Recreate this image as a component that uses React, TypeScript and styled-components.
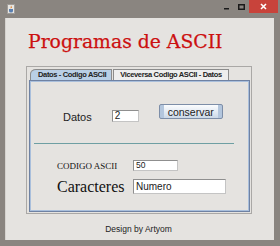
import styled, { createGlobalStyle } from "styled-components";

const Global = createGlobalStyle`
  body {
    margin: 0;
    background: #8a8580;
  }
`;

const Frame = styled.div`
  width: 280px;
  height: 246px;
  background: #8a8580;
  display: flex;
  flex-direction: column;
  box-sizing: border-box;
  padding: 0 6px 6px 5px;
`;

const TitleBar = styled.div`
  height: 18px;
  display: flex;
  align-items: flex-start;
  margin-right: -4px;
`;

const AppIcon = styled.svg`
  margin: 4px 0 0 2px;
`;

const Spacer = styled.div`
  flex: 1;
`;

const WinButton = styled.div<{ $close?: boolean }>`
  width: ${(p) => (p.$close ? "29px" : "15px")};
  height: 13px;
  display: flex;
  align-items: center;
  justify-content: center;
  background: ${(p) => (p.$close ? "#c8433b" : "transparent")};
`;

const Body = styled.div`
  flex: 1;
  background: #e5e3e0;
  border-left: 1px solid #d6d3cf;
  display: flex;
  flex-direction: column;
`;

const Heading = styled.h1`
  margin: 12px 0 0 22px;
  font-family: "DejaVu Serif", serif;
  font-weight: normal;
  font-size: 18.8px;
  line-height: 23px;
  color: #cc1010;
  -webkit-text-stroke: 0.25px #cc1010;
`;

const PaneBox = styled.div`
  margin: 13px 0 0 20px;
  width: 226px;
  height: 148px;
  box-sizing: border-box;
  border: 1px solid #aaa8a6;
  padding: 2px 1px 1px 2px;
  display: flex;
  flex-direction: column;
`;

const TabStrip = styled.div`
  display: flex;
  height: 11px;
  gap: 1px;
  padding-left: 1px;
`;

const Tab = styled.div<{ $active?: boolean }>`
  height: 11px;
  box-sizing: border-box;
  padding: 0 ${(p) => (p.$active ? "5px 0 7px" : "6px")};
  border: 1px solid #8c8c8c;
  border-bottom: none;
  border-top-left-radius: ${(p) => (p.$active ? "6px 5px" : "0")};
  background: ${(p) => (p.$active ? "#b9cfe6" : "#eeeeee")};
  font-family: "Liberation Sans", Arial, sans-serif;
  font-weight: bold;
  font-size: 7.5px;
  letter-spacing: -0.35px;
  line-height: 10px;
  color: #222222;
  white-space: nowrap;
`;

const Content = styled.div`
  flex: 1;
  border: 1px solid #6f82a3;
  box-shadow: inset 1px 1px 0 #a9bfdc, inset -1px -1px 0 #a9bfdc;
  display: flex;
  flex-direction: column;
`;

const TopRow = styled.div`
  display: flex;
  align-items: flex-start;
  margin: 23px 0 0 33px;
`;

const SansLabel = styled.span`
  font-family: "Liberation Sans", Arial, sans-serif;
  font-size: 11px;
  line-height: 12px;
  color: #222222;
  margin-top: 7px;
`;

const Field = styled.div<{ $w: number; $h: number; $size: number }>`
  width: ${(p) => p.$w}px;
  height: ${(p) => p.$h}px;
  box-sizing: border-box;
  background: #ffffff;
  border: 1px solid #8f8f8f;
  border-right-color: #c4c4c4;
  border-bottom-color: #c4c4c4;
  padding-left: 2px;
  font-family: "Liberation Sans", Arial, sans-serif;
  font-size: ${(p) => p.$size}px;
  line-height: ${(p) => p.$h - 2}px;
  color: #222222;
`;

const DatosField = styled(Field)`
  margin: 6px 0 0 20px;
`;

const Button = styled.div`
  margin-left: 20px;
  width: 64px;
  height: 15px;
  box-sizing: border-box;
  border: 1px solid #7d8ea8;
  border-radius: 2px;
  background: linear-gradient(
      to right,
      #b3c6dd 0,
      #b3c6dd 4px,
      transparent 4px,
      transparent calc(100% - 4px),
      #b3c6dd calc(100% - 4px)
    ),
    linear-gradient(to bottom, #fbfcfe, #dfe8f2 60%, #cbd8e7);
  display: flex;
  align-items: center;
  justify-content: center;
  font-family: "Liberation Sans", Arial, sans-serif;
  font-size: 10.5px;
  color: #222222;
`;

const Separator = styled.div`
  margin: 20px 0 0 4px;
  width: 200px;
  height: 1px;
  background: #6e9fa3;
`;

const FormGrid = styled.div`
  display: grid;
  grid-template-columns: 76px auto;
  align-items: center;
  row-gap: 7px;
  margin: 16px 0 0 27px;
`;

const SerifLabel = styled.span<{ $size: number }>`
  font-family: "Liberation Serif", "Times New Roman", serif;
  font-size: ${(p) => p.$size}px;
  line-height: ${(p) => p.$size + 1}px;
  color: #111111;
`;

const Footer = styled.div`
  margin-top: 10px;
  text-align: center;
  padding-right: 3px;
  font-family: "Liberation Sans", Arial, sans-serif;
  font-size: 8.5px;
  line-height: 10px;
  color: #222222;
`;

export default function App() {
  return (
    <>
      <Global />
      <Frame>
        <TitleBar>
          <AppIcon width="8" height="10" viewBox="0 0 8 10">
            <rect x="0.5" y="0.5" width="7" height="9" fill="#e8e6e2" stroke="#a09c98" />
            <path d="M4 1.5 L5 3.5 L3.5 4.5 Z" fill="#e07818" />
            <path d="M2 5 H6 V7 Q6 8.5 4 8.5 Q2 8.5 2 7 Z" fill="#5a7fb0" />
          </AppIcon>
          <Spacer />
          <WinButton>
            <svg width="6" height="6" viewBox="0 0 6 6">
              <rect x="0" y="4" width="5" height="1.5" fill="#1a1a1a" />
            </svg>
          </WinButton>
          <WinButton>
            <svg width="7" height="6" viewBox="0 0 7 6">
              <rect x="0.75" y="0.75" width="5.5" height="4.5" fill="none" stroke="#1a1a1a" strokeWidth="1.5" />
            </svg>
          </WinButton>
          <WinButton $close>
            <svg width="7" height="7" viewBox="0 0 7 7">
              <path d="M1 1 L6 6 M6 1 L1 6" stroke="#ffffff" strokeWidth="1.6" />
            </svg>
          </WinButton>
        </TitleBar>
        <Body>
          <Heading>Programas de ASCII</Heading>
          <PaneBox>
            <TabStrip>
              <Tab $active>Datos - Codigo ASCII</Tab>
              <Tab>Viceversa Codigo ASCII - Datos</Tab>
            </TabStrip>
            <Content>
              <TopRow>
                <SansLabel>Datos</SansLabel>
                <DatosField $w={27} $h={12} $size={10}>
                  2
                </DatosField>
                <Button>conservar</Button>
              </TopRow>
              <Separator />
              <FormGrid>
                <SerifLabel $size={9}>CODIGO ASCII</SerifLabel>
                <Field $w={45} $h={11} $size={8.5}>
                  50
                </Field>
                <SerifLabel $size={16}>Caracteres</SerifLabel>
                <Field $w={93} $h={15} $size={10}>
                  Numero
                </Field>
              </FormGrid>
            </Content>
          </PaneBox>
          <Footer>Design by Artyom</Footer>
        </Body>
      </Frame>
    </>
  );
}
